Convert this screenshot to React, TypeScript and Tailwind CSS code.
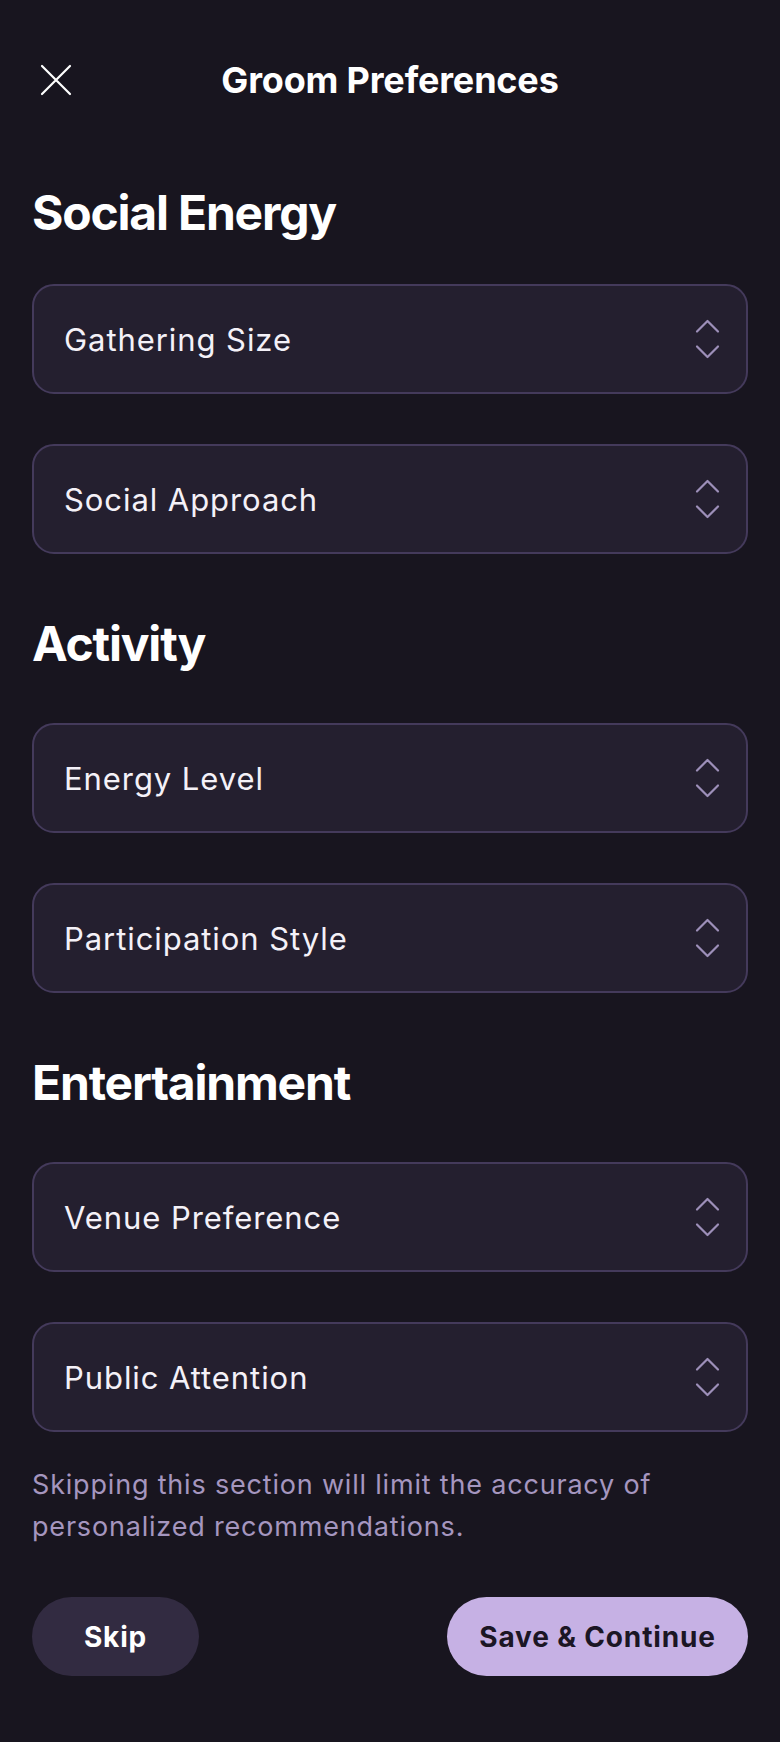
const font = { fontFamily: "Inter, 'Noto Sans', sans-serif" };

type Section = { title: string; fields: string[] };

const SECTIONS: Section[] = [
  { title: "Social Energy", fields: ["Gathering Size", "Social Approach"] },
  { title: "Activity", fields: ["Energy Level", "Participation Style"] },
  { title: "Entertainment", fields: ["Venue Preference", "Public Attention"] },
];

function Chevrons() {
  return (
    <svg width="25" height="42" viewBox="0 0 25 42" fill="none" className="text-[#9d8fb9]">
      <path d="M2 13.5 L12.5 3 L23 13.5" stroke="currentColor" strokeWidth="2.2" strokeLinecap="round" strokeLinejoin="round" />
      <path d="M2 28.5 L12.5 39 L23 28.5" stroke="currentColor" strokeWidth="2.2" strokeLinecap="round" strokeLinejoin="round" />
    </svg>
  );
}

function CloseIcon() {
  return (
    <svg width="32" height="32" viewBox="0 0 32 32" fill="none">
      <path d="M2 2 L30 30 M30 2 L2 30" stroke="white" strokeWidth="2.2" strokeLinecap="round" />
    </svg>
  );
}

function SelectField({ label }: { label: string }) {
  return (
    <button
      type="button"
      className="flex h-[110px] w-full items-center justify-between rounded-[22px] border-2 border-[#443a5b] bg-[#241f2f] pl-[30px] pr-[26px] text-left"
    >
      <span className="text-[31px] leading-none tracking-[0.03em] text-[#f4f1f8]">{label}</span>
      <Chevrons />
    </button>
  );
}

export default function App() {
  return (
    <div className="min-h-[1742px] w-full bg-[#18151f] px-8 pt-12 text-white" style={font}>
      {/* Header */}
      <div className="grid h-16 grid-cols-[1fr_auto_1fr] items-center">
        <button type="button" className="flex h-12 w-12 items-center justify-center">
          <CloseIcon />
        </button>
        <h1 className="text-[36px] font-bold tracking-[-0.005em] text-white">Groom Preferences</h1>
        <div />
      </div>

      {SECTIONS.map((s, i) => (
        <section key={s.title} className={i === 0 ? "mt-[73px]" : "mt-[62px]"}>
          <h2 className={`text-[48px] font-bold leading-[56px] tracking-[-0.025em] text-white ${i === 0 ? "mb-[43px]" : "mb-[51px]"}`}>
            {s.title}
          </h2>
          <div className="flex flex-col gap-[50px]">
            {s.fields.map((f) => (
              <SelectField key={f} label={f} />
            ))}
          </div>
        </section>
      ))}

      <p className="mt-[32px] text-[27px] leading-[42px] tracking-[0.03em] text-[#a596bf]">
        Skipping this section will limit the accuracy of personalized recommendations.
      </p>

      <div className="mt-[49px] flex items-center justify-between">
        <button type="button" className="h-[79px] w-[167px] rounded-full bg-[#322b41] text-[28px] font-bold tracking-[0.03em] text-white">
          Skip
        </button>
        <button type="button" className="h-[79px] w-[301px] rounded-full bg-[#c6b1e4] text-[28px] font-bold tracking-[0.03em] text-[#1b1624]">
          Save &amp; Continue
        </button>
      </div>
    </div>
  );
}
